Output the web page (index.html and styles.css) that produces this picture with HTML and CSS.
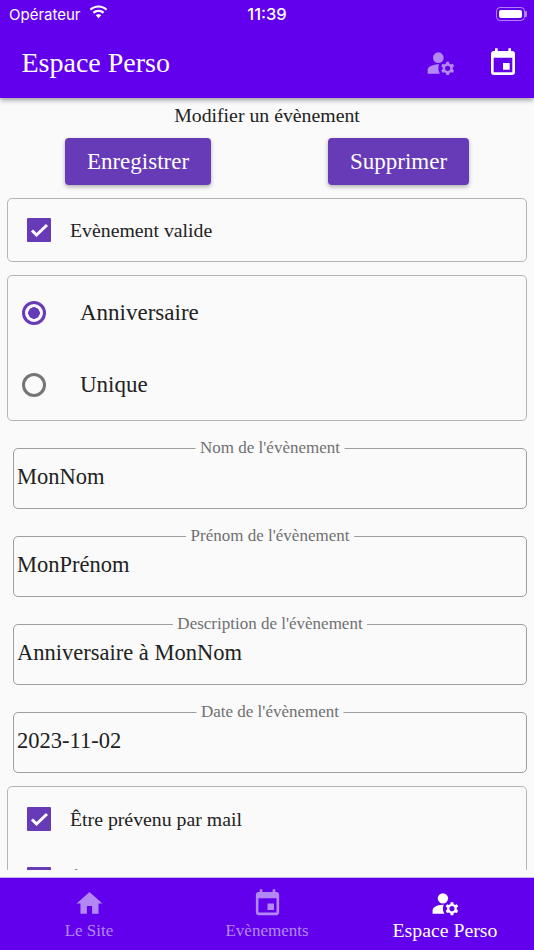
FILE: index.html
```html
<!DOCTYPE html>
<html lang="fr">
<head>
<meta charset="utf-8">
<title>Espace Perso</title>
<link rel="stylesheet" href="styles.css">
</head>
<body>
<div class="app">
  <header class="topbar">
    <div class="status">
      <div class="status-left">
        <span>Opérateur</span>
        <svg class="wifi" viewBox="0 0 20 15"><path d="M10 2.200c3 0 5.800 1.200 7.800 3.200l1.500-1.600C16.900 1.400 13.600 0 10 0S3.100 1.400.7 3.800l1.500 1.600c2-2 4.800-3.200 7.800-3.200z"/><path d="M10 6.900c1.700 0 3.300.7 4.500 1.800l1.600-1.600C14.500 5.600 12.300 4.700 10 4.700s-4.500.9-6.100 2.400l1.600 1.600c1.200-1.100 2.800-1.800 4.500-1.800z"/><path d="M10 9.400c-1.100 0-2.100.4-2.900 1.100L10 13.600l2.900-3.100c-.8-.7-1.800-1.100-2.900-1.100z"/></svg>
      </div>
      <span class="status-time">11:39</span>
      <div class="battery"><span class="battery-fill"></span><span class="battery-nub"></span></div>
    </div>
    <div class="appbar">
      <h1 class="app-title">Espace Perso</h1>
      <svg class="bar-icon dim" viewBox="0 0 24 24"><use href="#i-manage"/></svg>
      <svg class="bar-icon" viewBox="0 0 24 24"><use href="#i-event"/></svg>
    </div>
  </header>

  <main class="content">
    <p class="page-title">Modifier un évènement</p>
    <div class="actions">
      <button class="btn btn-save">Enregistrer</button>
      <button class="btn btn-del">Supprimer</button>
    </div>

    <section class="card card-valid">
      <div class="check-row">
        <span class="checkbox"><svg viewBox="0 0 24 24"><path d="M5 12.500l4.500 4.500L20 7"/></svg></span>
        <span class="check-label">Evènement valide</span>
      </div>
    </section>

    <section class="card card-radio">
      <div class="radio-row">
        <span class="radio on"></span>
        <span class="radio-label">Anniversaire</span>
      </div>
      <div class="radio-row">
        <span class="radio"></span>
        <span class="radio-label">Unique</span>
      </div>
    </section>

    <div class="field"><span class="field-label">Nom de l'évènement</span><span class="field-value">MonNom</span></div>
    <div class="field"><span class="field-label">Prénom de l'évènement</span><span class="field-value">MonPrénom</span></div>
    <div class="field"><span class="field-label">Description de l'évènement</span><span class="field-value">Anniversaire à MonNom</span></div>
    <div class="field"><span class="field-label">Date de l'évènement</span><span class="field-value">2023-11-02</span></div>

    <section class="card card-notify">
      <div class="check-row">
        <span class="checkbox"><svg viewBox="0 0 24 24"><path d="M5 12.500l4.500 4.500L20 7"/></svg></span>
        <span class="check-label">Être prévenu par mail</span>
      </div>
      <div class="check-row">
        <span class="checkbox"><svg viewBox="0 0 24 24"><path d="M5 12.500l4.500 4.500L20 7"/></svg></span>
        <span class="check-label">Être prévenu par notification</span>
      </div>
    </section>
  </main>

  <nav class="tabbar">
    <div class="tab">
      <svg class="tab-icon" viewBox="0 0 24 24"><path d="M10 20v-6h4v6h5v-8h3L12 3 2 12h3v8z"/></svg>
      <span class="tab-label">Le Site</span>
    </div>
    <div class="tab">
      <svg class="tab-icon" viewBox="0 0 24 24"><use href="#i-event"/></svg>
      <span class="tab-label">Evènements</span>
    </div>
    <div class="tab active">
      <svg class="tab-icon" viewBox="0 0 24 24"><use href="#i-manage"/></svg>
      <span class="tab-label">Espace Perso</span>
    </div>
  </nav>
</div>

<svg class="defs" aria-hidden="true">
  <symbol id="i-event" viewBox="0 0 24 24"><path d="M17 12h-5v5h5v-5zM16 1v2H8V1H6v2H5c-1.110 0-1.990.9-1.990 2L3 19c0 1.100.89 2 2 2h14c1.100 0 2-.9 2-2V5c0-1.100-.9-2-2-2h-1V1h-2zm3 18H5V8h14v11z"/></symbol>
  <symbol id="i-manage" viewBox="0 0 24 24"><circle cx="10" cy="8" r="4"/><path d="M10.670 13.020C10.450 13.010 10.230 13 10 13c-2.420 0-4.680.67-6.610 1.820C2.510 15.340 2 16.320 2 17.350V20h9.260C10.470 18.870 10 17.490 10 16c0-1.070.25-2.070.67-2.980z"/><path d="M20.750 16c0-.22-.03-.42-.06-.63l1.140-1.010-1-1.730-1.450.49c-.32-.27-.68-.48-1.080-.63L18 11h-2l-.3 1.490c-.4.15-.76.36-1.080.63l-1.450-.49-1 1.730 1.140 1.010c-.03.21-.06.41-.06.63s.03.42.06.63l-1.140 1.010 1 1.730 1.450-.49c.32.27.68.48 1.080.63L16 21h2l.3-1.490c.4-.15.76-.36 1.080-.63l1.450.49 1-1.730-1.140-1.010c.03-.21.06-.41.06-.63zM17 18c-1.100 0-2-.9-2-2s.9-2 2-2 2 .9 2 2-.9 2-2 2z"/></symbol>
</svg>
</body>
</html>
```
FILE: styles.css
```css
* { box-sizing: border-box; }
html, body { margin: 0; padding: 0; }
body {
  width: 534px;
  height: 950px;
  overflow: hidden;
  background: #fafafa;
  color: #222;
  font-family: "Liberation Serif", serif;
}
.defs { display: none; }
.app { display: flex; flex-direction: column; height: 950px; }

.topbar {
  flex: none;
  height: 98px;
  background: #6200ee;
  color: #fff;
  box-shadow: 0 2px 5px rgba(0,0,0,.4);
  position: relative;
  z-index: 2;
}
.status {
  height: 28px;
  padding: 0 9px 0 9px;
  display: grid;
  grid-template-columns: 1fr auto 1fr;
  align-items: center;
  font-family: Inter, "Liberation Sans", sans-serif;
  font-size: 15px;
}
.status-left { display: flex; align-items: center; gap: 8px; }
.wifi { width: 19px; height: 15px; fill: #fff; margin-bottom: 3px; }
.status-time { font-size: 16.5px; font-weight: 500; }
.battery {
  position: relative;
  justify-self: end;
  width: 29px;
  height: 14px;
  border: 1px solid rgba(255,255,255,.5);
  border-radius: 4px;
  padding: 2px;
  display: flex;
}
.battery-fill { flex: 1; background: #fff; border-radius: 2px; }
.battery-nub {
  position: absolute;
  right: -3px;
  top: 3px;
  width: 2px;
  height: 6px;
  background: rgba(255,255,255,.5);
  border-radius: 0 1px 1px 0;
}

.appbar {
  height: 70px;
  display: flex;
  align-items: center;
  padding: 0 15px 0 21.5px;
}
.app-title {
  flex: 1;
  margin: 0;
  font-size: 28px;
  font-weight: 400;
}
.bar-icon { width: 32px; height: 32px; fill: #fff; margin-left: 30px; }
.bar-icon.dim { fill: #b388f5; }

.content {
  flex: 1;
  min-height: 0;
  margin-bottom: 7px;
  overflow: hidden;
}
.page-title {
  margin: 0;
  padding-top: 5px;
  height: 40px;
  text-align: center;
  font-size: 19.8px;
  line-height: 24px;
}
.actions { display: flex; gap: 117px; padding-left: 65px; }
.btn {
  height: 47px;
  padding: 0;
  border: 0;
  border-radius: 4px;
  background: #673ab7;
  color: #fff;
  font-family: inherit;
  font-size: 23px;
  box-shadow: 0 2px 4px rgba(0,0,0,.3);
}
.btn-save { width: 146px; }
.btn-del { width: 141px; }

.card {
  margin: 13px 7px 0;
  width: 520px;
  border: 1px solid #b5b5b5;
  border-radius: 5px;
}
.card-valid { height: 64px; padding: 0 19px; display: flex; align-items: center; }
.card-radio { height: 146px; padding: 1px 14px 0; }
.card-notify { height: 200px; padding: 8px 19px 0; }

.check-row { display: flex; align-items: center; gap: 19px; font-size: 19.8px; }
.card-notify .check-row { height: 48px; margin-bottom: 12px; }
.checkbox {
  width: 24px;
  height: 24px;
  background: #673ab7;
  border-radius: 1px;
  display: flex;
}
.checkbox svg { width: 24px; height: 24px; fill: none; stroke: #fff; stroke-width: 3; }

.radio-row { height: 72px; display: flex; align-items: center; gap: 34px; font-size: 23px; }
.radio {
  flex: none;
  width: 24px;
  height: 24px;
  border: 3px solid #757575;
  border-radius: 50%;
}
.radio.on {
  border-color: #673ab7;
  background: radial-gradient(circle, #673ab7 0 5.500px, transparent 6px);
}

.field {
  position: relative;
  margin: 27px 7px 0 13px;
  width: 514px;
  height: 61px;
  border: 1px solid #9e9e9e;
  border-radius: 5px;
  padding: 0 3px 4px;
  display: flex;
  align-items: center;
}
.field-label {
  position: absolute;
  top: -11px;
  left: 50%;
  transform: translateX(-50%);
  padding: 0 4.500px;
  background: #fafafa;
  color: #707070;
  font-size: 17px;
  line-height: 20px;
  white-space: nowrap;
}
.field-value { font-size: 22.500px; }

.tabbar {
  flex: none;
  height: 73px;
  background: #6200ee;
  border-top: 1px solid #c9b3ee;
  display: grid;
  grid-template-columns: repeat(3, 178px);
}
.tab {
  display: flex;
  flex-direction: column;
  align-items: center;
  padding-top: 10px;
  color: #b388f5;
}
.tab-icon { width: 31px; height: 31px; fill: currentColor; }
.tab-label { font-size: 17px; line-height: 20px; margin-top: 2px; }
.tab.active { color: #fff; }
.tab.active .tab-label { font-size: 19.800px; line-height: 22px; margin-top: 0; }
```
